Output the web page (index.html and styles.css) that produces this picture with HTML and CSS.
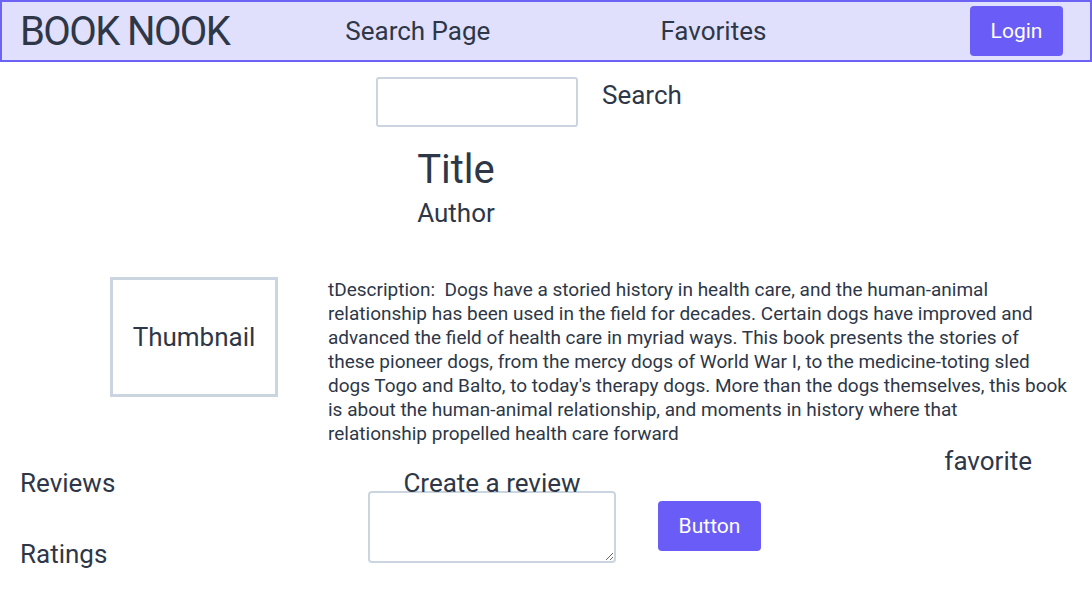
FILE: index.html
```html
<!DOCTYPE html>
<html>
<head>
<meta charset="utf-8">
<link rel="stylesheet" href="styles.css">
</head>
<body>
<header class="nav">
  <div class="brand">BOOK NOOK</div>
  <a class="nav-link link-search">Search Page</a>
  <a class="nav-link link-fav">Favorites</a>
  <button class="btn login">Login</button>
</header>
<main class="page">
  <div class="search-row">
    <input class="search-input" type="text">
    <span class="search-label">Search</span>
  </div>
  <div class="heading">
    <h1 class="title">Title</h1>
    <h2 class="author">Author</h2>
  </div>
  <div class="detail">
    <div class="thumb">Thumbnail</div>
    <p class="desc">tDescription:&nbsp; Dogs have a storied history in health care, and the human-animal relationship has been used in the field for decades. Certain dogs have improved and advanced the field of health care in myriad ways. This book presents the stories of these pioneer dogs, from the mercy dogs of World War I, to the medicine-toting sled dogs Togo and Balto, to today's therapy dogs. More than the dogs themselves, this book is about the human-animal relationship, and moments in history where that<br>relationship propelled health care forward</p>
  </div>
  <div class="fav-row"><span class="fav">favorite</span></div>
  <div class="bottom">
    <div class="side">
      <div class="side-item">Reviews</div>
      <div class="side-item">Ratings</div>
    </div>
    <div class="review">
      <div class="review-label">Create a review</div>
      <textarea class="review-box"></textarea>
    </div>
    <button class="btn submit">Button</button>
  </div>
</main>
</body>
</html>
```
FILE: styles.css
```css
* { box-sizing: border-box; }
body {
  margin: 0;
  font-family: Roboto, "Liberation Sans", sans-serif;
  color: #2d3748;
  background: #fff;
}
.nav {
  display: flex;
  align-items: center;
  height: 62px;
  background: #e0e0fc;
  border: 2px solid #6c63f5;
  padding: 0 27px 0 18px;
}
.brand {
  font-size: 40px;
  letter-spacing: -1.6px;
}
.nav-link {
  font-size: 26px;
}
.link-search { margin-left: 116px; }
.link-fav { margin-left: 170px; }
.btn {
  border: none;
  background: #6a5cf6;
  color: #fff;
  border-radius: 4px;
  font-family: inherit;
  font-size: 21px;
}
.login {
  margin-left: auto;
  width: 93px;
  height: 50px;
}
.search-row {
  display: flex;
  align-items: flex-start;
  padding-left: 376px;
  margin-top: 15px;
}
.search-input {
  width: 202px;
  height: 50px;
  border: 2px solid #cbd5e0;
  border-radius: 3px;
}
.search-label {
  font-size: 26px;
  margin-left: 24px;
  margin-top: 3px;
}
.heading {
  width: 912px;
  text-align: center;
  margin-top: 20px;
}
.title {
  font-size: 40px;
  font-weight: 400;
  margin: 0;
  line-height: 46px;
}
.author {
  font-size: 26px;
  font-weight: 400;
  margin: 0;
  line-height: 40px;
}
.detail {
  display: flex;
  align-items: flex-start;
  margin-top: 44px;
  padding-left: 110px;
}
.thumb {
  width: 168px;
  height: 120px;
  border: 3px solid #cbd5e0;
  display: flex;
  align-items: center;
  justify-content: center;
  font-size: 26px;
}
.desc {
  margin: 1px 0 0 50px;
  width: 741px;
  font-size: 19px;
  line-height: 24px;
}
.fav-row {
  display: flex;
  justify-content: flex-end;
  padding-right: 60px;
  line-height: 30px;
}
.fav { font-size: 26px; }
.bottom {
  display: flex;
  align-items: flex-start;
  padding-left: 20px;
  margin-top: -11px;
}
.side {
  width: 348px;
}
.side-item {
  font-size: 26px;
  line-height: 36px;
  margin-bottom: 35px;
}
.review {
  display: flex;
  flex-direction: column;
  align-items: center;
  width: 248px;
}
.review-label {
  font-size: 26px;
  line-height: 36px;
  margin-bottom: -10px;
  position: relative;
  z-index: 1;
}
.review-box {
  width: 248px;
  height: 72px;
  border: 2px solid #cbd5e0;
  border-radius: 4px;
  background: transparent;
}
.submit {
  width: 103px;
  height: 50px;
  margin-left: 42px;
  margin-top: 36px;
}
```
